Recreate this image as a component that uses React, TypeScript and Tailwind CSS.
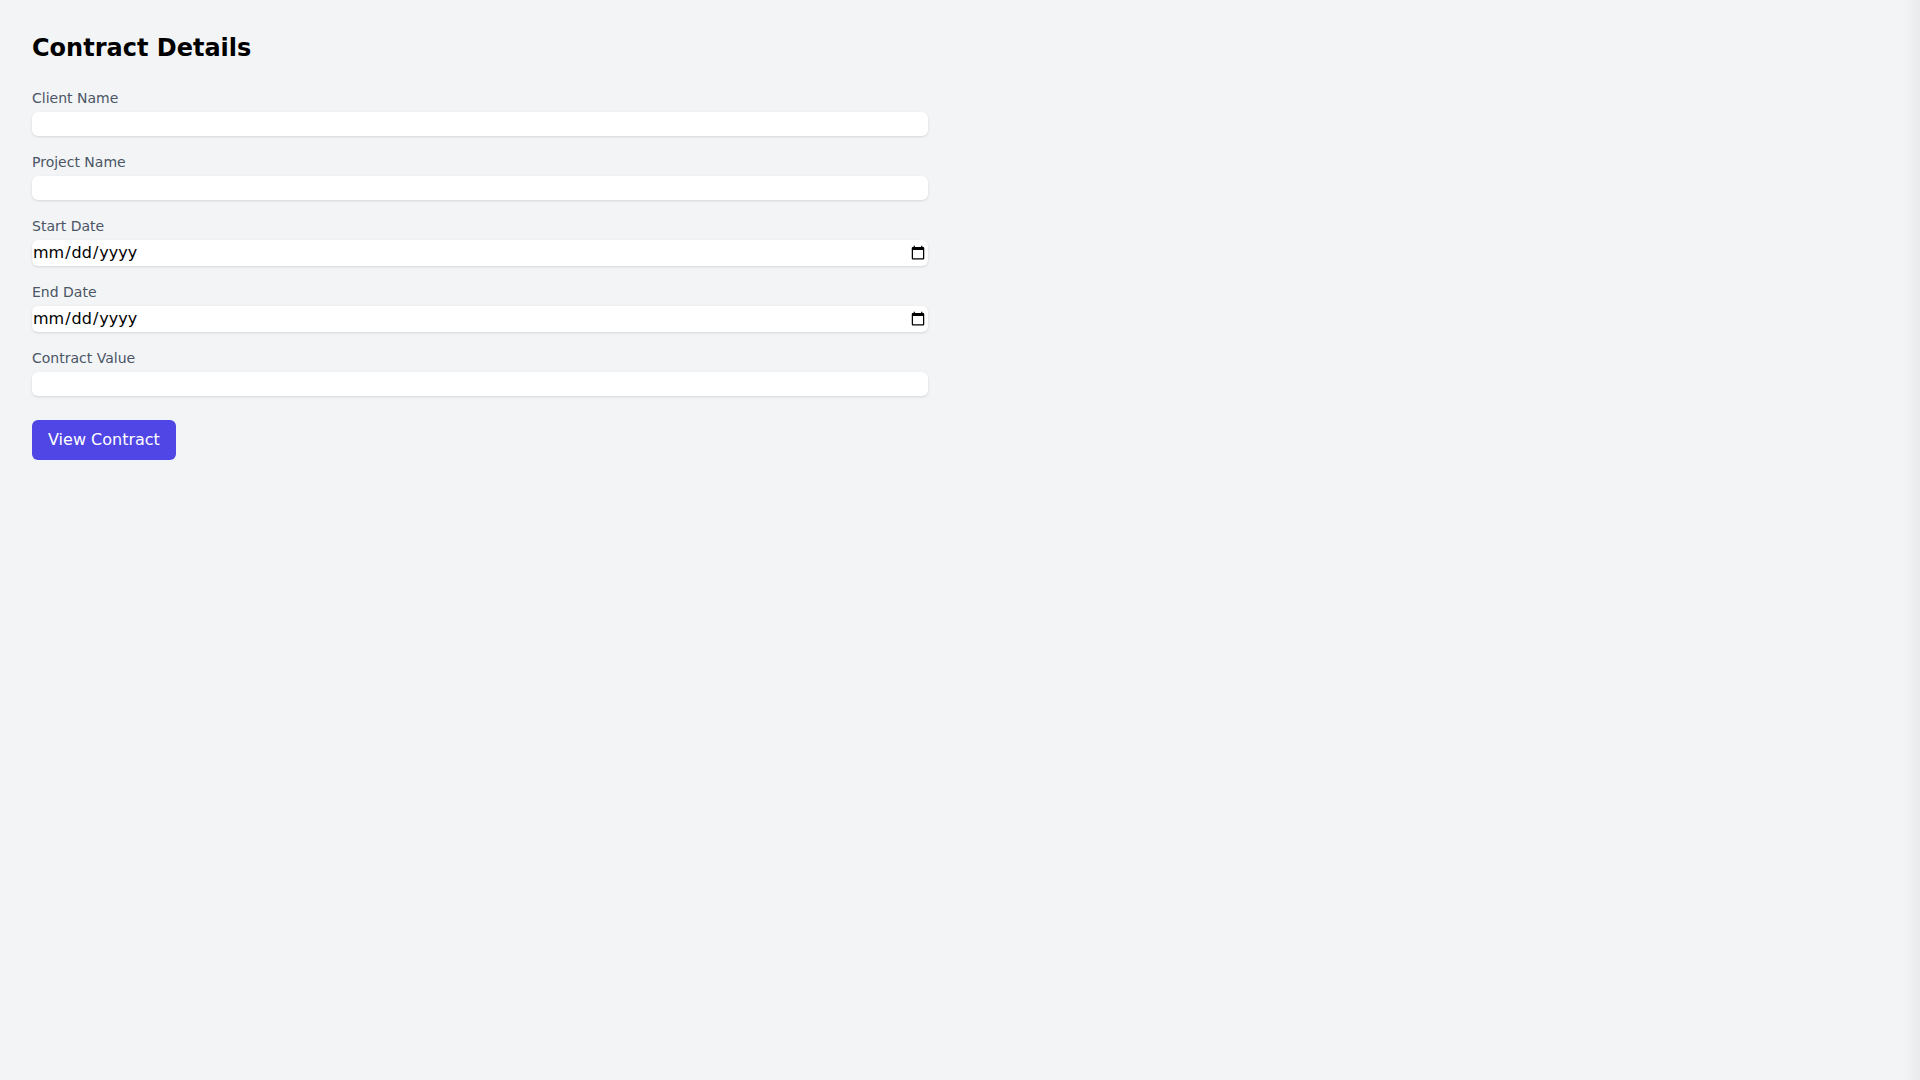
import { useState } from "react";

const fields = [
    { id: "client", label: "Client Name", type: "text" },
    { id: "project", label: "Project Name", type: "text" },
    { id: "start", label: "Start Date", type: "date" },
    { id: "end", label: "End Date", type: "date" },
    { id: "value", label: "Contract Value", type: "number" },
];

const App = () => {
    const [values, setValues] = useState<Record<string, string>>({});

    return (
        <div className="min-h-screen bg-gray-100 p-8 font-['DejaVu_Sans',sans-serif] relative">
            <h1 className="text-2xl font-bold text-black mb-6">Contract Details</h1>

            {/* Form */}
            <form className="max-w-4xl flex flex-col gap-4" onSubmit={(e) => e.preventDefault()}>
                {fields.map((f) => (
                    <div key={f.id}>
                        <label htmlFor={f.id} className="block text-sm text-gray-600">
                            {f.label}
                        </label>
                        <input
                            id={f.id}
                            type={f.type}
                            value={values[f.id] ?? ""}
                            onChange={(e) => setValues({ ...values, [f.id]: e.target.value })}
                            className={
                                f.type === "date"
                                    ? "mt-1 block w-full rounded-md bg-white shadow-sm outline-none py-px"
                                    : "mt-1 block w-full rounded-md bg-white shadow-sm outline-none"
                            }
                        />
                    </div>
                ))}

                <div className="mt-2">
                    <button
                        type="submit"
                        className="rounded-md bg-[#4f46e5] px-4 py-2 text-white font-normal"
                    >
                        View Contract
                    </button>
                </div>
            </form>

            {/* faint edge shade on the right */}
            <div className="fixed top-0 right-0 h-full w-[16px] bg-gradient-to-l from-black/[0.04] to-transparent pointer-events-none" />
        </div>
    );
};

export default App;
